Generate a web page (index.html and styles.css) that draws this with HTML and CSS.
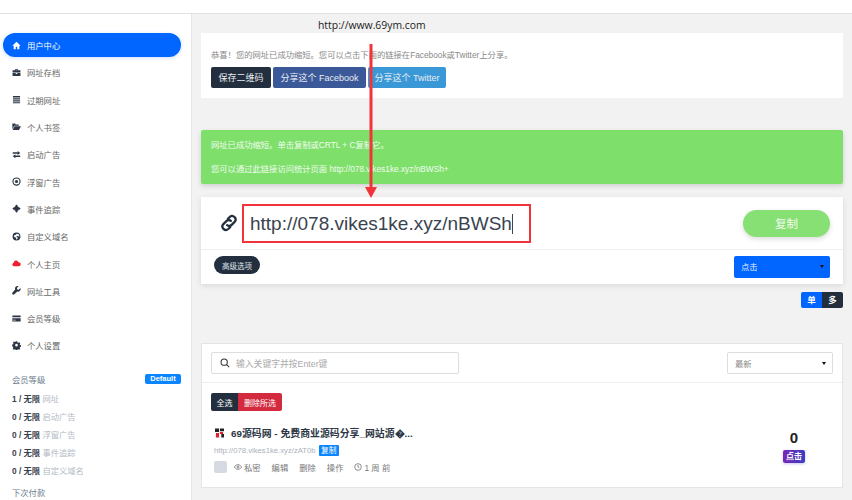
FILE: index.html
```html
<!DOCTYPE html>
<html lang="en">
<head>
  <meta charset="UTF-8" />
  <meta name="viewport" content="width=device-width, initial-scale=1.0" />
  <title>用户中心</title>
  <link rel="stylesheet" href="styles.css">
</head>
<body>

<div class="top-bar"></div>

<div class="page">

  <!-- Sidebar -->
  <aside class="sidebar">
    <ul class="nav">
      <li class="nav-item active">
        <svg class="nav-icon" viewBox="0 0 24 24"><path d="M12 2 1 12.500h3.500V22h5.500v-6.500h4V22h5.500v-9.500H23z"/></svg>用户中心
      </li>
      <li class="nav-item">
        <svg class="nav-icon" viewBox="0 0 24 24"><path d="M8 6V3.500h8V6h6.500v6h-21V6zM10 6h4V5h-4zM1.500 13.500h8.500V16h4v-2.500h8.500V21h-21z"/></svg>网址存档
      </li>
      <li class="nav-item">
        <svg class="nav-icon" viewBox="0 0 24 24"><path d="M2.500 2.500h19v4h-19zM2.500 8.500h19v3.500h-19zM2.500 14h19v3.500h-19zM2.500 19.500h19v2.500h-19z"/></svg>过期网址
      </li>
      <li class="nav-item">
        <svg class="nav-icon" viewBox="0 0 24 24"><path d="M1 4h7l2 2.500h8V10H6L1 19zM6.800 11.500H24L18.500 21H1.500z"/></svg>个人书签
      </li>
      <li class="nav-item">
        <svg class="nav-icon" viewBox="0 0 24 24"><path d="M2 6h13V2.500L22 8l-7 5.500V10H2zM22 14.500H9V11l-7 5.500L9 22v-3.500h13z"/></svg>启动广告
      </li>
      <li class="nav-item">
        <svg class="nav-icon" viewBox="0 0 24 24"><circle cx="12" cy="12" r="9.500" fill="none" stroke="currentColor" stroke-width="3"/><circle cx="12" cy="12" r="4.200"/></svg>浮窗广告
      </li>
      <li class="nav-item">
        <svg class="nav-icon" viewBox="0 0 24 24"><path d="m12 1 5 5.500h-2.500L17.500 9.500V7l5.500 5-5.500 5v-2.500L14.500 17.500H17L12 23l-5-5.500h2.500L6.500 14.500V17L1 12l5.500-5v2.500L9.500 6.500H7z"/></svg>事件追踪
      </li>
      <li class="nav-item">
        <svg class="nav-icon" viewBox="0 0 24 24"><path d="M12 1.500a10.500 10.500 0 1 0 0 21 10.500 10.500 0 0 0 0-21zm1 3 5 1.500 2 5-3 1-2-2-3 .5 1 3.500 3 1-3 5-2-1v-3.500L6 13 5 9.500 9 8z"/></svg>自定义域名
      </li>
      <li class="nav-item">
        <svg class="nav-icon cloud" viewBox="0 0 24 24"><path d="M6 19.500a5 5 0 0 1-1.500-9.800A6.500 6.500 0 0 1 17 8.500a5.500 5.500 0 0 1 1.500 11z"/></svg>个人主页
      </li>
      <li class="nav-item">
        <svg class="nav-icon" viewBox="0 0 24 24"><path d="M22.500 5.500 18 10l-4-1-1-4 4.500-4.500A7 7 0 0 0 8.500 9.500L1.500 17a3.200 3.200 0 0 0 4.800 4.800L14 14.800a7 7 0 0 0 8.500-9.300z"/></svg>网址工具
      </li>
      <li class="nav-item">
        <svg class="nav-icon" viewBox="0 0 24 24"><path d="M1 4h22v4.500H1zM1 11h22v9H1zM3.500 15v2h6v-2z" fill-rule="evenodd"/></svg>会员等级
      </li>
      <li class="nav-item">
        <svg class="nav-icon" viewBox="0 0 24 24"><path fill-rule="evenodd" d="m10 1.500h4l.7 3 2.300 1 2.700-1.600 2.800 2.800-1.600 2.700 1 2.300 2.600.7v4l-2.600.6-1 2.300 1.600 2.700-2.800 2.800-2.700-1.600-2.300 1-.7 2.800h-4l-.7-2.800-2.300-1-2.700 1.600-2.800-2.800 1.600-2.700-1-2.300L0 14.300v-4l2.700-.7 1-2.300-1.600-2.700 2.800-2.800 2.700 1.600 1.700-1zM12 8.500a3.700 3.700 0 1 0 0 7.400 3.700 3.700 0 0 0 0-7.400z" transform="scale(.96) translate(.5 -.6)"/></svg>个人设置
      </li>
    </ul>

    <div class="plan-head">
      <span>会员等级</span>
      <span class="plan-badge">Default</span>
    </div>
    <ul class="plan-list">
      <li><b>1 / 无限</b> 网址</li>
      <li><b>0 / 无限</b> 启动广告</li>
      <li><b>0 / 无限</b> 浮窗广告</li>
      <li><b>0 / 无限</b> 事件追踪</li>
      <li><b>0 / 无限</b> 自定义域名</li>
    </ul>
    <div class="plan-next">下次付款</div>
  </aside>

  <!-- Main column -->
  <main class="main">

    <section class="card share-card">
      <p class="share-text">恭喜！您的网址已成功缩短。您可以点击下面的链接在Facebook或Twitter上分享。</p>
      <div class="share-buttons">
        <button class="btn btn-dark">保存二维码</button>
        <button class="btn btn-facebook">分享这个 Facebook</button>
        <button class="btn btn-twitter">分享这个 Twitter</button>
      </div>
    </section>

    <section class="alert">
      <p>网址已成功缩短。单击复制或CRTL + C复制它。</p>
      <p>您可以通过此链接访问统计页面 http://078.vikes1ke.xyz/nBWSh+</p>
    </section>

    <section class="card url-card">
      <div class="url-row">
        <svg class="link-icon" viewBox="0 0 24 24"><path d="M10.500 6.500 13 4a4.600 4.600 0 0 1 6.500 6.500L15.500 14.500a4.600 4.600 0 0 1-6 .4M13.500 17.500 11 20a4.600 4.600 0 0 1-6.500-6.500L8.500 9.500a4.600 4.600 0 0 1 6-.4"/></svg>
        <div class="url-box">http://078.vikes1ke.xyz/nBWSh</div>
        <button class="copy-btn">复制</button>
      </div>
      <div class="url-options">
        <button class="pill-btn">高级选项</button>
        <div class="select select-blue">点击</div>
      </div>
    </section>

    <div class="view-toggle">
      <span class="toggle-on">单</span><span class="toggle-off">多</span>
    </div>

    <section class="card list-card">
      <div class="list-search">
        <div class="search-input">
          <svg class="search-icon" viewBox="0 0 24 24"><circle cx="10" cy="10" r="7.500"/><path d="m16 16 6 6"/></svg>
          输入关键字并按Enter键
        </div>
        <div class="select select-plain">最新</div>
      </div>
      <div class="list-body">
        <div class="bulk-buttons">
          <button class="bulk-btn bulk-all">全选</button><button class="bulk-btn bulk-del">删除所选</button>
        </div>
        <div class="link-row">
          <div class="link-info">
            <div class="link-title">
              <svg class="favicon" viewBox="0 0 10 10"><path fill="#222" d="M0 0h4.500v4H0zM5.500 0H10v3H5.500zM7 6h3v4H7z"/><path fill="#e0202c" d="M1 5h3.500v5H1zM5.500 4H9v2H5.500z"/></svg>
              69源码网 - 免费商业源码分享_网站源�...
            </div>
            <div class="link-url">http://078.vikes1ke.xyz/zAT0b <span class="copy-tag">复制</span></div>
            <div class="link-actions">
              <span class="check"></span>
              <span class="action"><svg class="eye-icon" viewBox="0 0 24 24"><path d="M1 12s4-7 11-7 11 7 11 7-4 7-11 7-11-7-11-7z"/><circle cx="12" cy="12" r="3"/></svg>私密</span>
              <span class="action">编辑</span>
              <span class="action">删除</span>
              <span class="action">操作</span>
              <span class="action"><svg class="eye-icon" viewBox="0 0 24 24"><circle cx="12" cy="12" r="10"/><path d="M12 6v6l4 2"/></svg>1 周 前</span>
            </div>
          </div>
          <div class="link-stats">
            <div class="stat-num">0</div>
            <div class="stat-tag">点击</div>
          </div>
        </div>
      </div>
    </section>

  </main>
</div>

<!-- Annotation drawn over the screenshot -->
<div class="note-url">http://www.69ym.com</div>
<svg class="note-arrow" viewBox="0 0 12 154"><path fill="#f2333a" d="M4.500 0h3v143H12l-6 11-6-11h4.500z"/></svg>

</body>
</html>
```

FILE: styles.css
```css
/* General Styles */
body {
  margin: 0;
  width: 852px;
  height: 500px;
  overflow: hidden;
  position: relative;
  font-family: "Liberation Sans", "Noto Sans CJK SC", sans-serif;
  font-size: 8.3px;
  color: #555;
  background-color: #f2f2f2;
}

ul {
  list-style-type: none;
  margin: 0;
  padding: 0;
}

p {
  margin: 0;
}

button {
  border: 0;
  padding: 0;
  font-family: inherit;
  cursor: pointer;
}

.top-bar {
  height: 13px;
  background-color: #fff;
  border-bottom: 1px solid #e2e2e2;
}

.page {
  display: flex;
  height: 486px;
}

/* Sidebar */
.sidebar {
  flex: 0 0 192px;
  padding: 19px 10px 0 3px;
  box-sizing: border-box;
  background-color: #fff;
  border-right: 1px solid #e6e6e6;
}

.nav-item {
  display: flex;
  align-items: center;
  height: 24px;
  margin-bottom: 3.32px;
  padding-left: 9px;
  color: #666;
  border-radius: 12px;
}

.nav-item.active {
  color: #fff;
  background-color: #0066ff;
  box-shadow: 0 1px 4px rgba(0, 102, 255, 0.2);
}

.nav-icon {
  flex: 0 0 9px;
  width: 9px;
  height: 9px;
  margin-right: 6px;
  fill: #2c3644;
  color: #2c3644;
}

.nav-item.active .nav-icon {
  fill: #fff;
}

.nav-icon.cloud {
  fill: #f0202e;
}

.plan-head {
  display: flex;
  justify-content: space-between;
  align-items: center;
  margin-top: 16px;
  padding-left: 9px;
  color: #6b7a8d;
}

.plan-badge {
  width: 36px;
  height: 10px;
  line-height: 10px;
  text-align: center;
  font-size: 7.5px;
  font-weight: bold;
  color: #fff;
  background-color: #0a84ff;
  border-radius: 2px;
}

.plan-list {
  margin-top: 6px;
  padding-left: 9px;
  color: #b3bac4;
}

.plan-list li {
  height: 17.8px;
  line-height: 17.8px;
}

.plan-list b {
  color: #3a4350;
}

.plan-next {
  margin-top: 6px;
  padding-left: 9px;
  color: #6b7a8d;
}

/* Main column */
.main {
  flex: 1;
  padding: 19px 9px 0 9px;
}

.card {
  background-color: #fff;
}

.share-card {
  height: 65px;
  padding: 16px 10px 0;
  box-sizing: border-box;
}

.share-text {
  height: 18px;
  line-height: 12px;
  color: #888;
}

.share-buttons {
  display: flex;
  gap: 2px;
}

.btn {
  height: 21px;
  font-size: 9px;
  color: #e8edf3;
  border-radius: 2px;
}

.btn-dark {
  width: 60px;
  background-color: #232f3e;
}

.btn-facebook {
  width: 93px;
  background-color: #3b5998;
}

.btn-twitter {
  width: 78px;
  background-color: #3a98d6;
}

.alert {
  height: 54px;
  margin-top: 32px;
  padding: 9px 10px 0;
  box-sizing: border-box;
  color: #f2fbef;
  background-color: #7ee06b;
  border-radius: 2px;
  box-shadow: 0 2px 5px rgba(0, 0, 0, 0.15);
}

.alert p {
  height: 24px;
  line-height: 12px;
}

.url-card {
  height: 87px;
  margin-top: 13px;
  box-shadow: 0 2px 6px rgba(0, 0, 0, 0.1);
}

.url-row {
  display: flex;
  align-items: center;
  height: 52px;
  padding: 0 13px 0 19px;
  border-bottom: 1px solid #eee;
}

.link-icon {
  flex: 0 0 18px;
  width: 18px;
  height: 18px;
  margin-right: 4px;
  fill: none;
  stroke: #232f3e;
  stroke-width: 3;
  stroke-linecap: round;
}

.url-box {
  width: 279px;
  height: 35px;
  line-height: 35px;
  padding-left: 6px;
  font-size: 19px;
  color: #3a4350;
  border: 2px solid #f2333a;
}

.url-box::after {
  content: "";
  display: inline-block;
  width: 1px;
  height: 20px;
  vertical-align: -4px;
  background-color: #3a4350;
}

.copy-btn {
  width: 87px;
  height: 27px;
  margin-left: auto;
  font-size: 11.5px;
  color: #f2fbef;
  background-color: #87e073;
  border-radius: 14px;
  box-shadow: 0 2px 5px rgba(0, 0, 0, 0.15);
}

.url-options {
  display: flex;
  justify-content: space-between;
  align-items: flex-start;
  padding: 6px 13px 0;
}

.pill-btn {
  width: 46px;
  height: 18px;
  font-size: 7.5px;
  color: #dfe5ec;
  background-color: #232f3e;
  border-radius: 9px;
}

.select {
  position: relative;
  height: 22px;
  line-height: 22px;
  padding-left: 7px;
  box-sizing: border-box;
  border-radius: 2px;
}

.select::after {
  content: "";
  position: absolute;
  right: 6px;
  top: 9px;
  border-left: 2.5px solid transparent;
  border-right: 2.5px solid transparent;
  border-top: 3.5px solid #111;
}

.select-blue {
  width: 96px;
  color: #e6efff;
  background-color: #0066ff;
}

.select-plain {
  width: 106px;
  color: #888;
  border: 1px solid #ddd;
}

.view-toggle {
  display: flex;
  justify-content: flex-end;
  margin-top: 8px;
  height: 16px;
  line-height: 16px;
  text-align: center;
  font-size: 8.5px;
  font-weight: bold;
  color: #fff;
}

.toggle-on {
  width: 21px;
  background-color: #0066ff;
  border-radius: 2px 0 0 2px;
}

.toggle-off {
  width: 21px;
  background-color: #232f3e;
  border-radius: 0 2px 2px 0;
}

.list-card {
  height: 145px;
  margin-top: 35px;
  box-sizing: border-box;
  border: 1px solid #e4e4e4;
}

.list-search {
  display: flex;
  justify-content: space-between;
  height: 39px;
  padding: 8px 9px 0;
  box-sizing: border-box;
  border-bottom: 1px solid #eee;
}

.search-input {
  display: flex;
  align-items: center;
  width: 248px;
  height: 22px;
  padding-left: 8px;
  box-sizing: border-box;
  font-size: 8.8px;
  color: #aaa;
  border: 1px solid #ddd;
  border-radius: 2px;
}

.search-icon {
  width: 10px;
  height: 10px;
  margin-right: 6px;
  fill: none;
  stroke: #333;
  stroke-width: 2.5;
}

.list-body {
  padding: 10px 9px 0;
}

.bulk-buttons {
  display: flex;
}

.bulk-btn {
  height: 18px;
  font-size: 8px;
  color: #fff;
}

.bulk-all {
  width: 27px;
  background-color: #232f3e;
  border-radius: 2px 0 0 2px;
}

.bulk-del {
  width: 44px;
  background-color: #d32a3f;
  border-radius: 0 2px 2px 0;
}

.link-row {
  display: flex;
  justify-content: space-between;
  margin-top: 15px;
}

.link-title {
  display: flex;
  align-items: center;
  height: 13px;
  padding-left: 4px;
  font-size: 9.9px;
  font-weight: bold;
  color: #2c3644;
}

.favicon {
  width: 9px;
  height: 10px;
  margin-right: 7px;
}

.link-url {
  margin-top: 6px;
  padding-left: 3px;
  height: 11px;
  line-height: 11px;
  font-size: 7.7px;
  color: #aab1ba;
}

.copy-tag {
  display: inline-block;
  width: 20px;
  height: 11px;
  margin-left: 1px;
  text-align: center;
  color: #fff;
  background-color: #0a84ff;
  border-radius: 1px;
}

.link-actions {
  display: flex;
  align-items: center;
  gap: 11px;
  margin-top: 5px;
  padding-left: 3px;
  color: #777;
}

.check {
  width: 13px;
  height: 12px;
  margin-right: -4px;
  background-color: #d5dbe0;
  border-radius: 2px;
}

.action {
  display: flex;
  align-items: center;
}

.eye-icon {
  width: 8px;
  height: 8px;
  margin-right: 2px;
  fill: none;
  stroke: #555;
  stroke-width: 2;
}

.link-stats {
  width: 22px;
  margin-right: 28px;
  padding-top: 3px;
  text-align: center;
}

.stat-num {
  height: 17px;
  line-height: 17px;
  font-size: 15px;
  font-weight: bold;
  color: #222;
}

.stat-tag {
  height: 13px;
  line-height: 13px;
  margin-top: 4px;
  font-size: 8px;
  font-weight: bold;
  color: #fff;
  background: linear-gradient(90deg, #7b25b5, #3a3fc0);
  border-radius: 2px;
  box-shadow: 0 1px 3px rgba(58, 63, 192, 0.3);
}

/* Annotation */
.note-url {
  position: absolute;
  left: 318px;
  top: 18px;
  font-family: "Open Sans", sans-serif;
  font-size: 10.4px;
  line-height: 14px;
  color: #222;
}

.note-arrow {
  position: absolute;
  left: 365px;
  top: 44px;
  width: 12px;
  height: 154px;
}
```
